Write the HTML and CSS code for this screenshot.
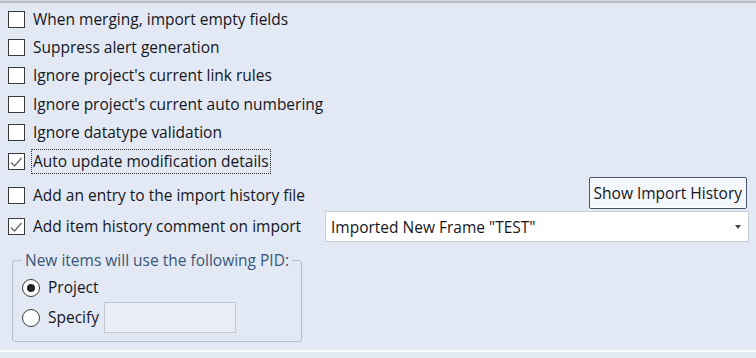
FILE: index.html
```html
<!DOCTYPE html>
<html lang="en">
<head>
  <meta charset="UTF-8">
  <title>Import options</title>
  <link rel="stylesheet" href="styles.css">
</head>
<body>
  <div class="panel">
    <div class="row"><label class="check"><span class="box"></span><span class="txt">When merging, import empty fields</span></label></div>
    <div class="row"><label class="check"><span class="box"></span><span class="txt">Suppress alert generation</span></label></div>
    <div class="row"><label class="check"><span class="box"></span><span class="txt">Ignore project's current link rules</span></label></div>
    <div class="row"><label class="check"><span class="box"></span><span class="txt">Ignore project's current auto numbering</span></label></div>
    <div class="row"><label class="check"><span class="box"></span><span class="txt">Ignore datatype validation</span></label></div>
    <div class="row"><label class="check"><span class="box checked"><svg viewBox="0 0 17 17" width="17" height="17"><path d="M3 9.5 L6.5 13 L13.5 5" fill="none" stroke="#6a6a6a" stroke-width="1.4"/></svg></span><span class="txt focus">Auto update modification details</span></label></div>
    <div class="row row-button">
      <label class="check"><span class="box"></span><span class="txt">Add an entry to the import history file</span></label>
      <button class="btn">Show Import History</button>
    </div>
    <div class="row row-combo">
      <label class="check"><span class="box checked"><svg viewBox="0 0 17 17" width="17" height="17"><path d="M3 9.5 L6.5 13 L13.5 5" fill="none" stroke="#6a6a6a" stroke-width="1.4"/></svg></span><span class="txt">Add item history comment on import</span></label>
      <div class="combo">
        <span class="combo-text">Imported New Frame "TEST"</span>
        <span class="combo-arrow"></span>
      </div>
    </div>
    <fieldset class="pid">
      <legend>New items will use the following PID:</legend>
      <div class="radio-row"><label class="radio"><span class="dot selected"></span><span class="txt">Project</span></label></div>
      <div class="radio-row"><label class="radio"><span class="dot"></span><span class="txt">Specify</span></label><span class="field"></span></div>
    </fieldset>
  </div>
  <div class="footer"></div>
</body>
</html>
```

FILE: styles.css
```css
html, body {
  margin: 0;
  padding: 0;
  width: 756px;
  height: 358px;
  overflow: hidden;
  background: #e2e9f4;
}
body {
  font-family: 'Open Sans', 'Noto Sans', sans-serif;
  font-size: 15.5px;
  color: #16161c;
  border-top: 1px solid #d6dae0;
}
.panel {
  height: 349px;
  box-sizing: border-box;
  border-top: 2px solid #b6bac1;
  padding: 2px 7px 0 8px;
}
.row {
  height: 28.4px;
  display: flex;
  align-items: center;
}
.check, .radio {
  display: flex;
  align-items: center;
  white-space: nowrap;
}
.box {
  width: 17px;
  height: 17px;
  box-sizing: border-box;
  border: 1px solid #3a3a3a;
  background: #fff;
  margin-right: 8px;
  position: relative;
}
.box svg {
  position: absolute;
  left: -1px;
  top: -1px;
}
.txt {
  line-height: 23px;
  padding: 0 1px;
  border: 1px dotted transparent;
  margin-left: -2px;
}
.txt.focus { border-color: #333; }
.row-button {
  height: 34px;
  margin-top: 2px;
  align-items: flex-start;
}
.row-button .check { margin-top: 6px; }
.btn {
  margin-left: auto;
  margin-right: 2px;
  height: 32px;
  padding: 0 4px;
  font-family: inherit;
  font-size: 15.5px;
  color: #16161c;
  background: #f3f6fa;
  border: 1px solid #45566a;
  border-radius: 2px;
  box-shadow: inset 0 0 0 1px #fdfeff;
}
.row-combo {
  height: 31px;
  align-items: center;
}
.combo {
  margin-left: auto;
  width: 424px;
  height: 31px;
  box-sizing: border-box;
  background: #fff;
  border: 1px solid #c9cfd8;
  display: flex;
  align-items: center;
  padding: 0 6px 0 5px;
}
.combo-text { flex: 1; }
.combo-arrow {
  width: 0;
  height: 0;
  border-left: 3.5px solid transparent;
  border-right: 3.5px solid transparent;
  border-top: 4px solid #444;
  margin-right: 1px;
}
.pid {
  margin: 8px 0 0 4px;
  width: 290px;
  box-sizing: border-box;
  border: 1px solid #b5becb;
  border-radius: 3px;
  padding: 3px 0 8px 9px;
}
.pid legend {
  margin-left: 0;
  padding: 0 3px;
  color: #3a5678;
  line-height: 20px;
}
.radio-row {
  height: 29px;
  display: flex;
  align-items: center;
}
.radio-row + .radio-row { height: 31px; }
.dot {
  width: 18px;
  height: 18px;
  box-sizing: border-box;
  border: 1px solid #3a3a3a;
  border-radius: 50%;
  background: #fff;
  margin-right: 8px;
  display: flex;
  align-items: center;
  justify-content: center;
}
.dot.selected::after {
  content: "";
  width: 8px;
  height: 8px;
  border-radius: 50%;
  background: #222;
}
.field {
  width: 132px;
  height: 31px;
  box-sizing: border-box;
  margin-left: 3px;
  background: #e9eef6;
  border: 1px solid #c1c8d2;
}
.footer {
  height: 2px;
  background: #fbfcfe;
  border-bottom: 6px solid #e5ebf4;
}
```
